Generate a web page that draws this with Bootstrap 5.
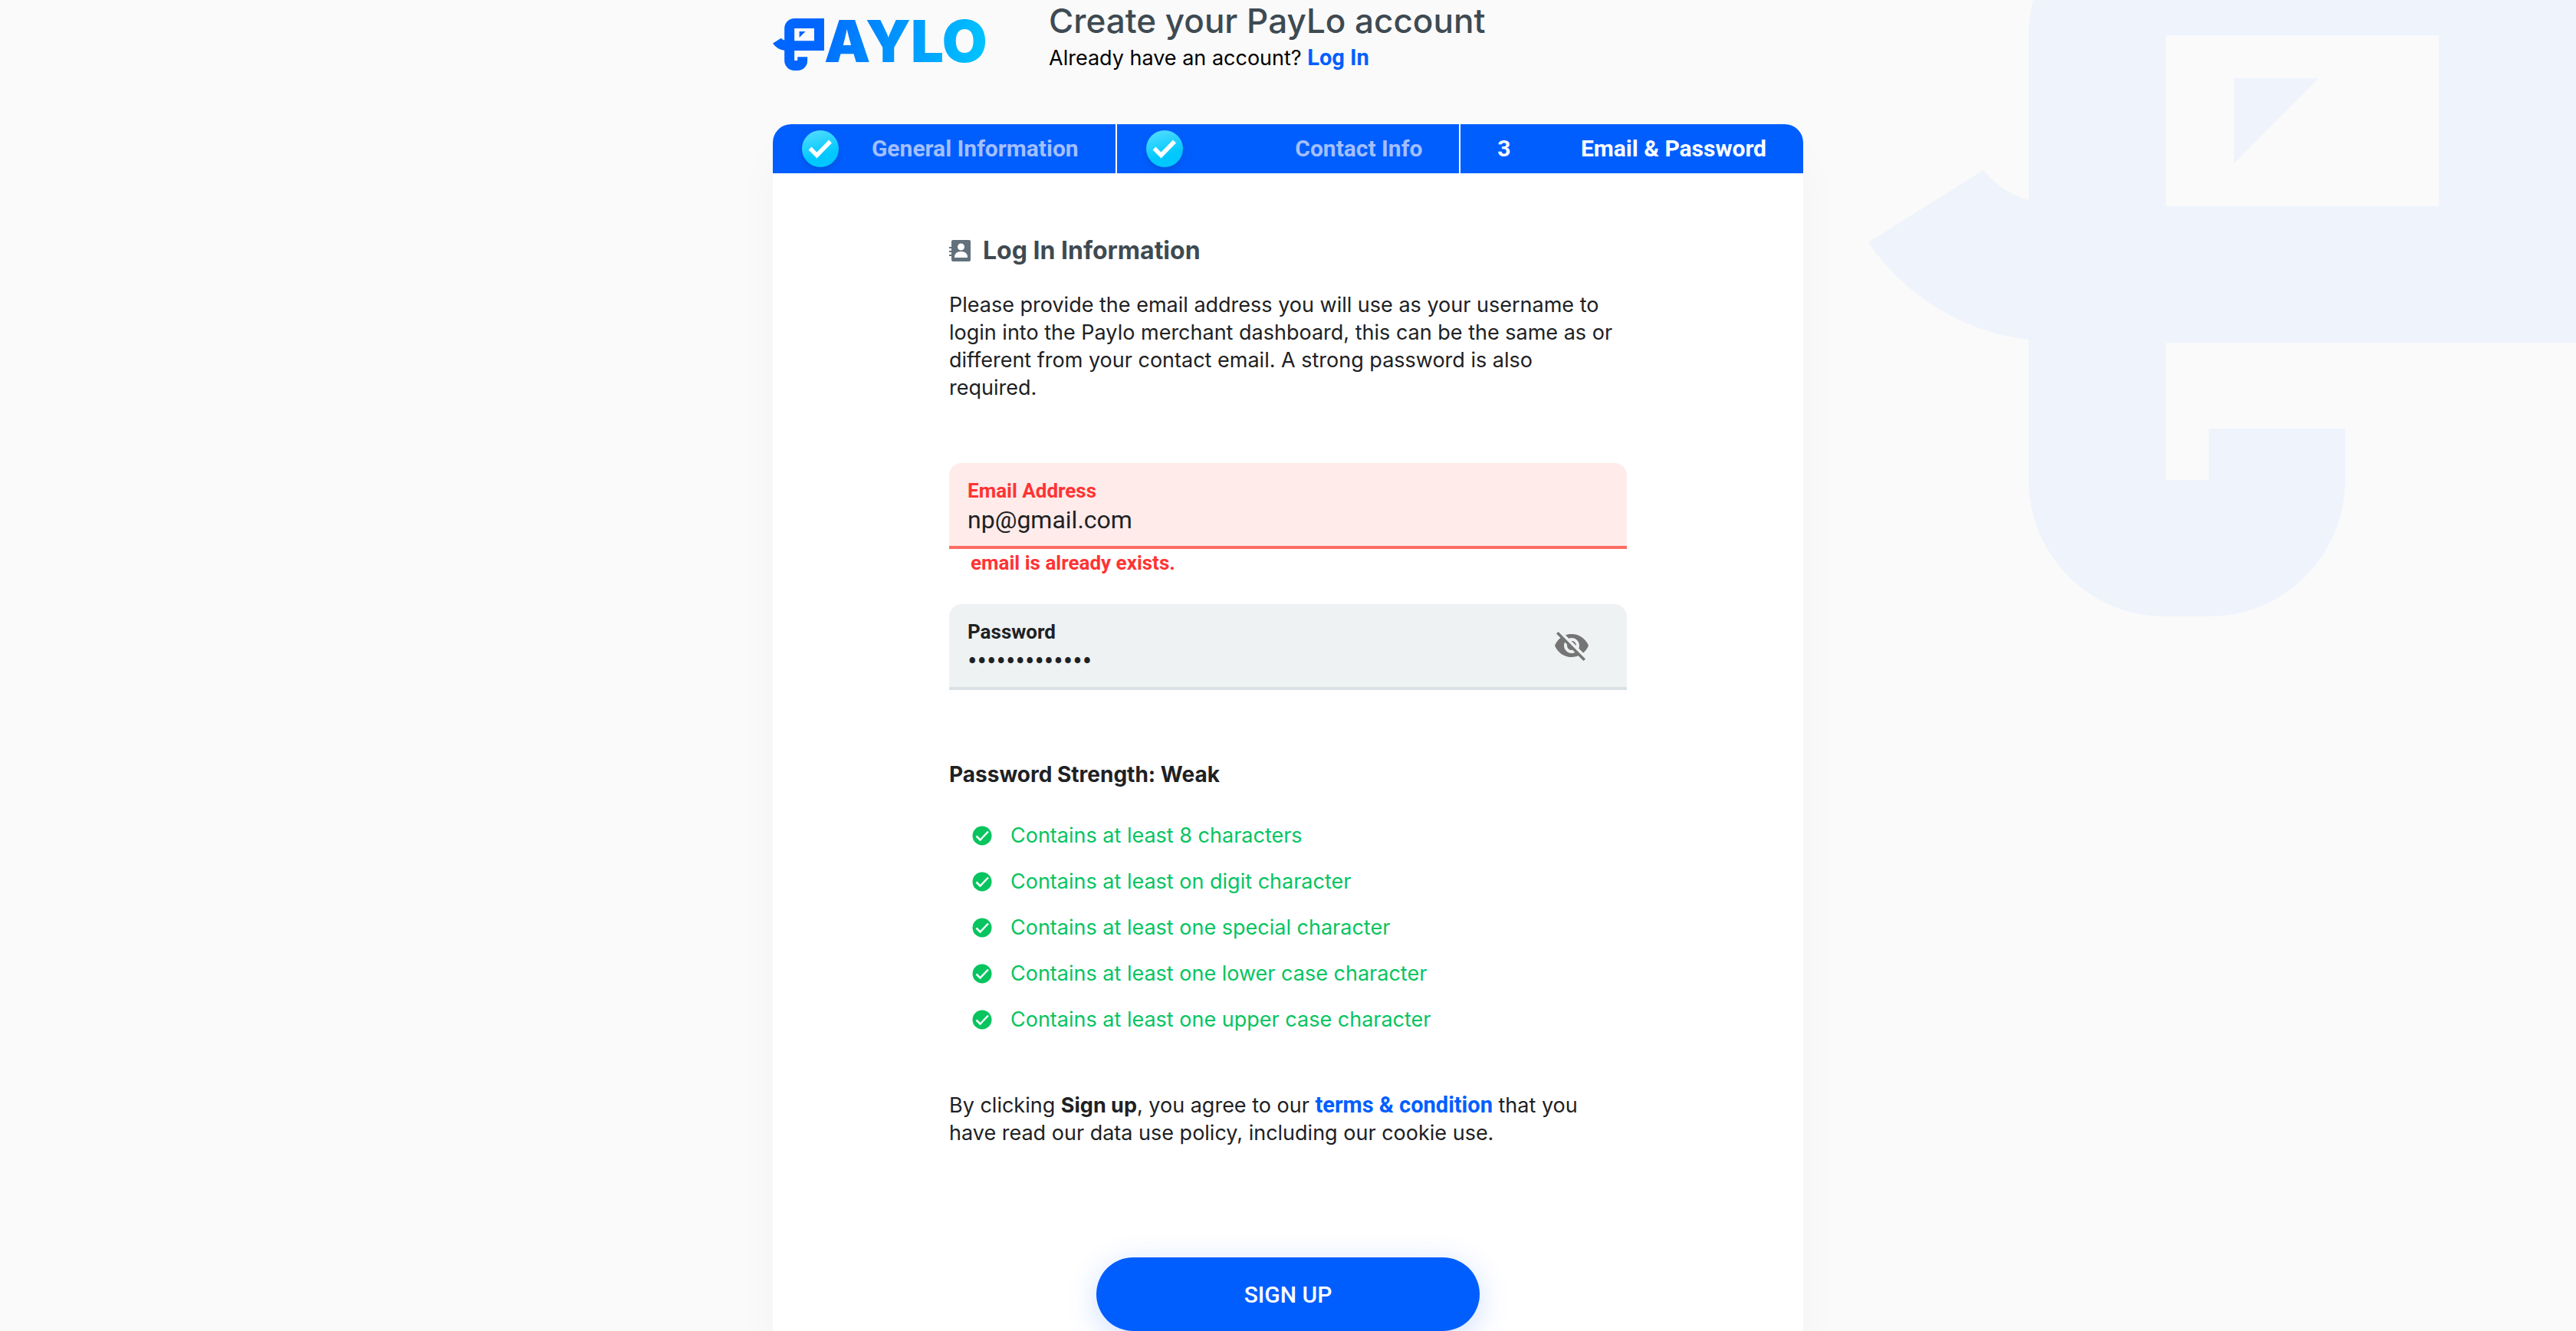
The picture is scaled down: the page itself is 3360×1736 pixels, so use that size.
<!DOCTYPE html>
<html lang="en">
<head>
<meta charset="utf-8">
<meta name="viewport" content="width=device-width, initial-scale=1">
<title>Create your PayLo account</title>
<link rel="stylesheet" href="https://cdn.jsdelivr.net/npm/bootstrap@5.3.0/dist/css/bootstrap.min.css">
<style>
  :root { --blue: #005eff; --slate: #3e4a52; --green: #07c45f; --red: #ff3333; }
  body { background: #fafafa; color: #202124; font: 400 27px/36px Inter, "Liberation Sans", sans-serif; }
  a { color: var(--blue); text-decoration: none; }
  .plex { font-family: Roboto, "Liberation Sans", sans-serif; font-weight: 700; font-size: 30px; }
  a.plex { font-size: 29px; line-height: 1; }
  .backdrop { top: -132px; width: 923px; fill: #eef3fc; z-index: -1; }
  .page-col { width: 40%; min-width: 1000px; }
  .page-head { padding-bottom: 68px; color: #000; }
  .brand { width: 360px; }
  .brand text { font: 900 76px Inter, "Liberation Sans", sans-serif; }
  .page-title { font-size: 44px; line-height: 54px; font-weight: 500; color: var(--slate); }
  .panel { border-radius: 24px 24px 0 0; box-shadow: 0 40px 60px rgba(0, 0, 0, .03); }
  .steps { background: var(--blue); border-radius: 24px 24px 0 0; height: 64px; }
  .step { flex: 1 1 0; padding: 0 48px 0 38px; color: #a3bfff; border-right: 2px solid #fff; }
  .step:last-child { border-right: 0; color: #fff; }
  .step-no { padding-left: 10px; }
  .step svg { filter: drop-shadow(0 4px 4px rgba(0, 60, 160, .35)); }
  .panel-body { padding: 80px 230px 0; }
  .section-title { font-size: 32px; line-height: 42px; font-weight: 700; color: var(--slate); gap: 16px; }
  .intro { margin: 32px 0 80px; }
  .intro, .terms { padding-right: 8px; }
  .field { background: #eef2f3; border-bottom: 4px solid #dae1e4; border-radius: 16px 16px 0 0; padding: 22px 24px 16px; }
  .field label, .field-error { font-size: 26px; line-height: 28px; }
  .field label { margin-bottom: 6px; }
  .field input { font: 400 32px/36px Roboto, "Liberation Sans", sans-serif; height: 36px; color: #202124; }
  .field input[type="password"] { font-size: 37px; }
  .field input:focus { outline: 0; }
  .field.has-error { background: #ffebea; border-color: #ff6b63; }
  .has-error label, .field-error { color: var(--red); }
  .field-error { padding: 4px 28px 0; margin-bottom: 40px; }
  .reveal { right: 48px; color: #757575; }
  .strength { margin-top: 92px; font-weight: 700; font-size: 28px; }
  .rules { color: var(--green); line-height: 60px; padding-left: 30px; margin-top: 32px; }
  .rules li { gap: 24px; }
  .terms { margin: 64px 0 144px; }
  .signup { width: 500px; height: 96px; border-radius: 48px; background: var(--blue); color: #fff; font-weight: 500; box-shadow: 0 8px 40px rgba(0, 94, 255, .2); }
  .signup:hover { background: #0052e0; color: #fff; }
</style>
<script src="https://cdn.jsdelivr.net/npm/bootstrap@5.3.0/dist/js/bootstrap.bundle.min.js"></script>
</head>
<body class="position-relative overflow-x-hidden">
<svg width="0" height="0" class="position-absolute" aria-hidden="true">
  <defs>
    <linearGradient id="brandFill" gradientUnits="userSpaceOnUse" x1="0" y1="24" x2="270" y2="84">
      <stop offset="0" stop-color="#005eff"/><stop offset=".2" stop-color="#0068ff"/><stop offset="1" stop-color="#00c3ff"/>
    </linearGradient>
    <linearGradient id="doneFill" x1=".3" y1="0" x2=".6" y2="1">
      <stop offset="0" stop-color="#4fdcff"/><stop offset=".7" stop-color="#00c8ff"/>
    </linearGradient>
    <symbol id="bird" viewBox="0 0 923 936">
      <path fill-rule="evenodd" d="M387 0H923V579H388V758H444V691H622V758A178 178 0 0 1 444 936H387A178 178 0 0 1 209 758V575A295 295 0 0 1 0 448L150 354A117 117 0 0 0 209 393V178A178 178 0 0 1 387 0ZM388 178V401H744V178ZM477 234H587L477 345Z"/>
    </symbol>
    <symbol id="done" viewBox="0 0 48 48">
      <circle cx="24" cy="24" r="24" fill="url(#doneFill)"/>
      <path d="M10.500 23.500L19.500 32.500L37 14.500" fill="none" stroke="#fff" stroke-width="5.500"/>
    </symbol>
    <symbol id="tick" viewBox="0 0 26 26">
      <circle cx="13" cy="13" r="12.500" fill="currentColor"/>
      <path d="M5.500 13.500L10.500 18.500L21 7.500" fill="none" stroke="#fff" stroke-width="2.500"/>
    </symbol>
  </defs>
</svg>
<svg class="backdrop position-absolute end-0" viewBox="0 0 923 936" aria-hidden="true"><use href="#bird"/></svg>

<main class="page-col mx-auto">
  <header class="page-head d-flex">
    <div class="brand flex-shrink-0">
      <svg class="d-block overflow-visible" width="320" height="94" viewBox="0 0 320 94" fill="url(#brandFill)" role="img" aria-label="PayLo">
        <use href="#bird" x="0" y="24" width="67" height="68" fill="#0066ff"/>
        <text x="67" y="81">AYLO</text>
      </svg>
    </div>
    <div>
      <h1 class="page-title mb-1">Create your PayLo account</h1>
      <p class="mb-0">Already have an account? <a href="#" class="plex">Log In</a></p>
    </div>
  </header>

  <section class="panel bg-white">
    <div class="steps plex d-flex overflow-hidden">
      <div class="step d-flex align-items-center justify-content-between"><svg width="48" height="48" aria-label="Done" role="img" overflow="visible"><use href="#done"/></svg><span>General Information</span></div>
      <div class="step d-flex align-items-center justify-content-between"><svg width="48" height="48" aria-label="Done" role="img" overflow="visible"><use href="#done"/></svg><span>Contact Info</span></div>
      <div class="step d-flex align-items-center justify-content-between"><span class="step-no">3</span><span>Email &amp; Password</span></div>
    </div>

    <form class="panel-body">
      <h2 class="section-title d-flex align-items-center mb-0">
        <svg width="28" height="28" viewBox="0 0 28 28" fill="#62717b" aria-hidden="true">
          <path fill-rule="evenodd" d="M5 0H26Q28 0 28 2V26Q28 28 26 28H5Q3 28 3 26V21H0V19H3V16H0V14H3V11H0V9H3V2Q3 0 5 0ZM15.500 4.500A4.500 4.500 0 1 0 15.500 13.500A4.500 4.500 0 1 0 15.500 4.500ZM7 23H24Q24 15 15.500 15Q7 15 7 23Z"/>
        </svg>
        Log In Information
      </h2>
      <p class="intro">Please provide the email address you will use as your username to login into the Paylo merchant dashboard, this can be the same as or different from your contact email. A strong password is also required.</p>

      <div class="field has-error">
        <label for="email" class="plex d-block">Email Address</label>
        <input id="email" type="email" value="np@gmail.com" aria-describedby="emailError" class="d-block w-100 border-0 p-0 bg-transparent">
      </div>
      <div id="emailError" class="field-error plex">email is already exists.</div>

      <div class="field position-relative">
        <label for="password" class="plex d-block">Password</label>
        <input id="password" type="password" value="Paylo#2023abc" class="d-block w-75 border-0 p-0 bg-transparent">
        <button type="button" class="reveal btn border-0 p-0 position-absolute top-50 translate-middle-y" aria-label="Show password">
          <svg class="d-block" width="48" height="48" viewBox="0 0 24 24" fill="currentColor"><path d="M12 7c2.760 0 5 2.240 5 5 0 .650-.130 1.260-.360 1.830l2.920 2.920c1.510-1.260 2.700-2.890 3.430-4.750-1.730-4.390-6-7.500-11-7.500-1.400 0-2.740.250-3.980.700l2.160 2.160C10.740 7.130 11.350 7 12 7zM2 4.270l2.280 2.280.460.460C3.080 8.300 1.780 10.020 1 12c1.730 4.390 6 7.500 11 7.500 1.550 0 3.030-.300 4.380-.840l.420.420L19.730 22 21 20.730 3.270 3 2 4.270zM7.530 9.800l1.550 1.550c-.050.210-.080.430-.080.650 0 1.660 1.340 3 3 3 .220 0 .440-.030.650-.080l1.550 1.550c-.670.330-1.410.530-2.200.530-2.760 0-5-2.240-5-5 0-.790.200-1.530.530-2.200zm4.310-.780l3.150 3.150.020-.160c0-1.660-1.340-3-3-3l-.170.010z"/></svg>
        </button>
      </div>

      <p class="strength mb-0">Password Strength: Weak</p>
      <ul class="rules list-unstyled mb-0">
        <li class="d-flex align-items-center"><svg width="26" height="26" aria-hidden="true"><use href="#tick"/></svg>Contains at least 8 characters</li>
        <li class="d-flex align-items-center"><svg width="26" height="26" aria-hidden="true"><use href="#tick"/></svg>Contains at least on digit character</li>
        <li class="d-flex align-items-center"><svg width="26" height="26" aria-hidden="true"><use href="#tick"/></svg>Contains at least one special character</li>
        <li class="d-flex align-items-center"><svg width="26" height="26" aria-hidden="true"><use href="#tick"/></svg>Contains at least one lower case character</li>
        <li class="d-flex align-items-center"><svg width="26" height="26" aria-hidden="true"><use href="#tick"/></svg>Contains at least one upper case character</li>
      </ul>

      <p class="terms">By clicking <strong>Sign up</strong>, you agree to our <a href="#" class="plex">terms &amp; condition</a> that you have read our data use policy, including our cookie use.</p>
      <button type="submit" class="signup plex btn d-block mx-auto border-0">SIGN UP</button>
    </form>
  </section>
</main>
</body>
</html>
